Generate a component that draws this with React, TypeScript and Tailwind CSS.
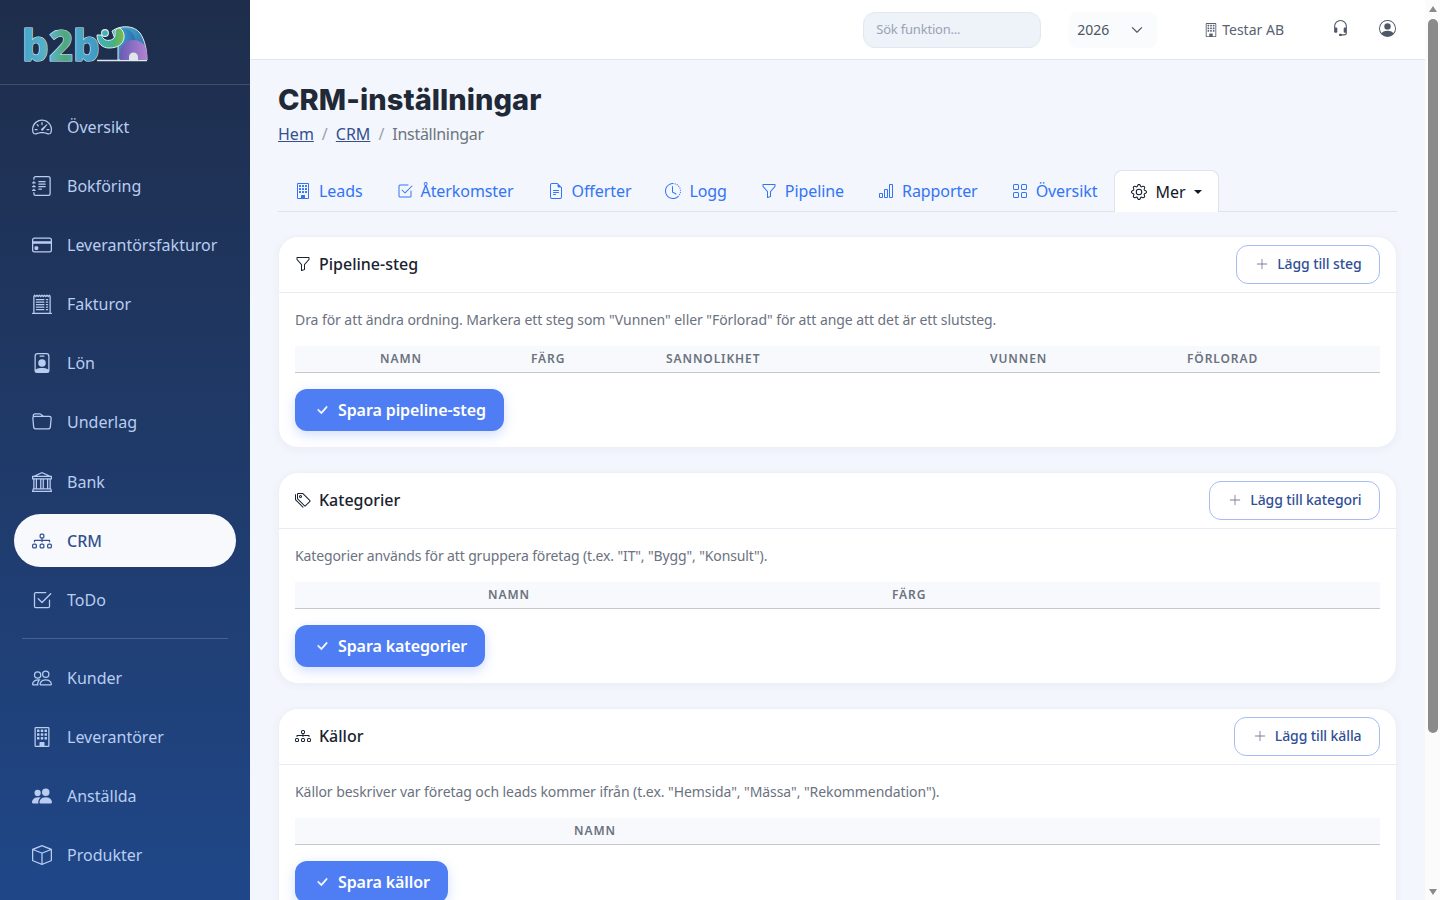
import type { ComponentType, ReactNode } from "react";
import {
  BsBank,
  BsBarChart,
  BsBox,
  BsBuilding,
  BsCheck2Square,
  BsCheckLg,
  BsChevronDown,
  BsClockHistory,
  BsCreditCard,
  BsDiagram3,
  BsFileEarmarkText,
  BsFolder,
  BsFunnel,
  BsGear,
  BsGrid,
  BsHeadset,
  BsJournalText,
  BsPeople,
  BsPeopleFill,
  BsPersonBadge,
  BsPersonCircle,
  BsPlusLg,
  BsReceiptCutoff,
  BsSpeedometer2,
  BsTags,
} from "react-icons/bs";

type Icon = ComponentType<{ className?: string }>;

const mainNav: { label: string; icon: Icon; active?: boolean }[] = [
  { label: "Översikt", icon: BsSpeedometer2 },
  { label: "Bokföring", icon: BsJournalText },
  { label: "Leverantörsfakturor", icon: BsCreditCard },
  { label: "Fakturor", icon: BsReceiptCutoff },
  { label: "Lön", icon: BsPersonBadge },
  { label: "Underlag", icon: BsFolder },
  { label: "Bank", icon: BsBank },
  { label: "CRM", icon: BsDiagram3, active: true },
  { label: "ToDo", icon: BsCheck2Square },
];

const registerNav: { label: string; icon: Icon }[] = [
  { label: "Kunder", icon: BsPeople },
  { label: "Leverantörer", icon: BsBuilding },
  { label: "Anställda", icon: BsPeopleFill },
  { label: "Produkter", icon: BsBox },
];

const tabs: { label: string; icon: Icon }[] = [
  { label: "Leads", icon: BsBuilding },
  { label: "Återkomster", icon: BsCheck2Square },
  { label: "Offerter", icon: BsFileEarmarkText },
  { label: "Logg", icon: BsClockHistory },
  { label: "Pipeline", icon: BsFunnel },
  { label: "Rapporter", icon: BsBarChart },
  { label: "Översikt", icon: BsGrid },
];

function Logo() {
  return (
    <svg width="130" height="60" viewBox="0 -10 130 60" aria-label="b2b">
      <defs>
        <linearGradient id="letters" x1="0" x2="1" y1="0" y2="0">
          <stop offset="0" stopColor="#45a5c9" />
          <stop offset="0.38" stopColor="#5bb4c6" />
          <stop offset="0.55" stopColor="#4fa878" />
          <stop offset="0.68" stopColor="#4aa9cc" />
          <stop offset="1" stopColor="#3f98c4" />
        </linearGradient>
        <linearGradient id="body" x1="0" x2="1" y1="0" y2="1">
          <stop offset="0" stopColor="#3fb6c9" />
          <stop offset="1" stopColor="#2f5fa8" />
        </linearGradient>
        <linearGradient id="ear" x1="0" x2="1" y1="0" y2="0">
          <stop offset="0" stopColor="#3f9ccf" />
          <stop offset="1" stopColor="#2c6cb0" />
        </linearGradient>
        <linearGradient id="legs" x1="0" x2="1" y1="0" y2="0">
          <stop offset="0" stopColor="#6a5cb8" />
          <stop offset="1" stopColor="#b184d0" />
        </linearGradient>
        <linearGradient id="trunk" x1="0" x2="1" y1="0" y2="0">
          <stop offset="0" stopColor="#3fb3c0" />
          <stop offset="0.6" stopColor="#45b08a" />
          <stop offset="1" stopColor="#7ebb3f" />
        </linearGradient>
      </defs>
      <text x="2" y="36" fontFamily="'Noto Sans', sans-serif" fontWeight="800" fontSize="42" fill="url(#letters)" stroke="#dfe9ee" strokeWidth="1.2" paintOrder="stroke">
        b2b
      </text>
      <path d="M77 35.5h50" stroke="#dfe6ea" strokeWidth="1.4" />
      <path d="M92 6C100 0 114 0 120 8c5 7 7 18 7 27H98V22z" fill="url(#body)" stroke="#e6edf1" strokeWidth="1" />
      <path d="M100 4c8-2 13 3 15 10 1 5 1 10-1 14h-10z" fill="url(#ear)" />
      <path d="M100 35V28a13.5 13 0 0 1 27 0v7z" fill="url(#legs)" />
      <path d="M109 35v-3a4.5 4.5 0 0 1 9 0v3z" fill="#dfe6ea" />
      <path d="M77 10c0 8 5 13 12 13 9 0 14-4 15-10 .5-4-1-8-4-10-2 0-4 1-5 3 .5 4 0 6-2 8-3 2-8 2-10-1-1-1-1-2-1-3z" fill="url(#trunk)" stroke="#e6edf1" strokeWidth="1" />
      <circle cx="85" cy="8" r="3.4" fill="#3fb3b4" stroke="#e6edf1" strokeWidth="1.1" />
    </svg>
  );
}

function SideLink({ label, icon: Icon, active }: { label: string; icon: Icon; active?: boolean }) {
  return (
    <a className={`mb-[6.18px] flex h-[53px] items-center rounded-[27px] pl-[18px] text-base ${active ? "bg-[#f8f9fd] font-medium text-[#33508f]" : "text-[#b9cdf1]"}`}>
      <Icon className="mr-[15px] h-5 w-5 shrink-0" />
      {label}
    </a>
  );
}

function Sidebar() {
  return (
    <aside className="sticky top-0 h-screen w-[250px] shrink-0 overflow-hidden bg-gradient-to-b from-[#1e2d4b] to-[#1f4788]">
      <div className="flex h-[85px] items-start border-b border-[#3d4e6b] pl-5 pt-[15px]">
        <Logo />
      </div>
      <nav className="px-[14px] pt-[15px]">
        {mainNav.map((item) => <SideLink key={item.label} {...item} />)}
        <div className="mx-2 mb-[12.5px] mt-[11.6px] h-px bg-[#46618f]" />
        {registerNav.map((item) => <SideLink key={item.label} {...item} />)}
      </nav>
    </aside>
  );
}

function Topbar() {
  return (
    <header className="flex h-[60px] items-center justify-end border-b border-[#e1e5ec] bg-white pr-[29px]">
      <div className="flex h-9 w-[178px] items-center rounded-xl border border-[#e2e7f0] bg-[#eef2f9] px-3 text-[13px] tracking-[-0.2px] text-[#9aa3b5]">Sök funktion...</div>
      <div className="ml-7 flex h-9 w-[88px] items-center justify-between rounded-lg bg-[#f9fbfd] pl-2 pr-[14px] text-sm text-[#4b5563]">
        2026
        <BsChevronDown className="h-3 w-3 stroke-current stroke-[0.6px] text-[#374151]" />
      </div>
      <div className="ml-[47px] flex items-center gap-1 text-sm text-[#596273]">
        <BsBuilding className="h-[14px] w-[14px]" />
        Testar AB
      </div>
      <BsHeadset className="mb-[2px] ml-12 h-[17px] w-[17px] text-[#4f5866]" />
      <BsPersonCircle className="mb-[2px] ml-[30px] h-[17px] w-[17px] text-[#4f5866]" />
    </header>
  );
}

function Tabs() {
  return (
    <div className="mb-6 flex h-[42px] border-b border-[#dfe3ea]">
      {tabs.map(({ label, icon: Icon }) => (
        <a key={label} className="flex h-[41px] items-center border border-transparent px-4 text-base tracking-[-0.08px] text-[#3274f6]">
          <Icon className="mr-2 h-4 w-4" />
          {label}
        </a>
      ))}
      <a className="flex h-[42px] items-center rounded-t-lg border border-b-0 border-[#dfe3ea] bg-white px-4 text-base text-[#111827]">
        <BsGear className="mr-2 h-4 w-4" />
        Mer
        <span className="ml-2 h-0 w-0 border-x-[4px] border-t-[4px] border-x-transparent border-t-[#111827]" />
      </a>
    </div>
  );
}

function Card({
  icon: Icon,
  title,
  addLabel,
  text,
  textTracking,
  saveLabel,
  children,
}: {
  icon: Icon;
  title: string;
  addLabel: string;
  text: string;
  textTracking: string;
  saveLabel: string;
  children: ReactNode;
}) {
  return (
    <section className="mb-6 rounded-[20px] border border-[#edf0f6] bg-white shadow-[0_2px_8px_rgba(60,80,140,0.05)]">
      <div className="flex h-[56px] items-center justify-between border-b border-[#e8ebf3] pl-4 pr-4">
        <h2 className="mb-[2px] flex items-center text-base font-medium text-[#1a2230]">
          <Icon className="mr-2 h-4 w-4" />
          {title}
        </h2>
        <button type="button" className="flex h-[39px] items-center rounded-xl border border-[#a6bdf3] bg-white pb-px pl-[18px] pr-[17.5px] text-sm font-medium tracking-[-0.1px] text-[#2f4f96]">
          <BsPlusLg className="mr-2 h-[14px] w-[14px] text-[#7a7f9c]" />
          {addLabel}
        </button>
      </div>
      <div className="p-4">
        <p className={`mb-4 text-sm leading-[21px] text-[#6b7280] ${textTracking}`}>{text}</p>
        {children}
        <button type="button" className="mt-4 flex h-[42px] items-center rounded-xl bg-[#4f7df3] pl-5 pr-[18px] text-base font-semibold tracking-[-0.1px] text-white shadow-[0_4px_12px_rgba(79,125,243,0.25)]">
          <BsCheckLg className="mr-[9px] h-[14px] w-[14px] stroke-current stroke-[0.6px]" />
          {saveLabel}
        </button>
      </div>
    </section>
  );
}

function Scrollbar() {
  return (
    <div className="sticky top-0 flex h-screen w-[15px] shrink-0 flex-col items-center bg-[#fbfbfb] pb-[5px] pl-px pt-[6px]">
      <span className="h-0 w-0 border-x-[4.5px] border-b-[6px] border-x-transparent border-b-[#8a8a8a]" />
      <span className="mt-[7px] h-[714px] w-[10px] rounded-full bg-[#8a8a8a]" />
      <span className="mt-auto h-0 w-0 border-x-[4.5px] border-t-[6px] border-x-transparent border-t-[#8a8a8a]" />
    </div>
  );
}

const headCell = "text-xs font-semibold uppercase tracking-[0.9px] text-[#6b7280]";

export default function App() {
  return (
    <div className="flex min-h-screen bg-[#f3f6fc] font-['Noto_Sans',sans-serif]">
      <Sidebar />
      <main className="min-w-0 flex-1">
        <Topbar />
        <div className="px-7 pb-[151px] pt-[23px]">
          <h1 className="font-['Inter',sans-serif] text-[29px] font-extrabold leading-[34px] tracking-[0.05px] text-[#1f2937]">CRM-inställningar</h1>
          <div className="mb-6 mt-[5px] flex gap-2 text-base leading-6 text-[#6c757d]">
            <a className="text-[#34508f] underline">Hem</a>
            <span className="text-[#9aa1ad]">/</span>
            <a className="text-[#34508f] underline">CRM</a>
            <span className="text-[#9aa1ad]">/</span>
            <span className="tracking-[-0.3px]">Inställningar</span>
          </div>
          <Tabs />
          <Card
            icon={BsFunnel}
            title="Pipeline-steg"
            addLabel="Lägg till steg"
            text={'Dra för att ändra ordning. Markera ett steg som "Vunnen" eller "Förlorad" för att ange att det är ett slutsteg.'}
            textTracking="tracking-[-0.07px]"
            saveLabel="Spara pipeline-steg"
          >
            <div className="grid h-[27px] grid-cols-[151px_135px_324px_197px_1fr] items-center border-b border-[#c6c8cc] bg-[#f8f9fc] pl-[85px]">
              <span className={headCell}>Namn</span>
              <span className={headCell}>Färg</span>
              <span className={headCell}>Sannolikhet</span>
              <span className={headCell}>Vunnen</span>
              <span className={headCell}>Förlorad</span>
            </div>
          </Card>
          <Card
            icon={BsTags}
            title="Kategorier"
            addLabel="Lägg till kategori"
            text={'Kategorier används för att gruppera företag (t.ex. "IT", "Bygg", "Konsult").'}
            textTracking="tracking-[-0.13px]"
            saveLabel="Spara kategorier"
          >
            <div className="grid h-[27px] grid-cols-[404px_1fr] items-center border-b border-[#c6c8cc] bg-[#f8f9fc] pl-[193px]">
              <span className={headCell}>Namn</span>
              <span className={headCell}>Färg</span>
            </div>
          </Card>
          <Card
            icon={BsDiagram3}
            title="Källor"
            addLabel="Lägg till källa"
            text={'Källor beskriver var företag och leads kommer ifrån (t.ex. "Hemsida", "Mässa", "Rekommendation").'}
            textTracking="tracking-[-0.07px]"
            saveLabel="Spara källor"
          >
            <div className="flex h-[27px] items-center border-b border-[#c6c8cc] bg-[#f8f9fc] pl-[279px]">
              <span className={headCell}>Namn</span>
            </div>
          </Card>
        </div>
      </main>
      <Scrollbar />
    </div>
  );
}
